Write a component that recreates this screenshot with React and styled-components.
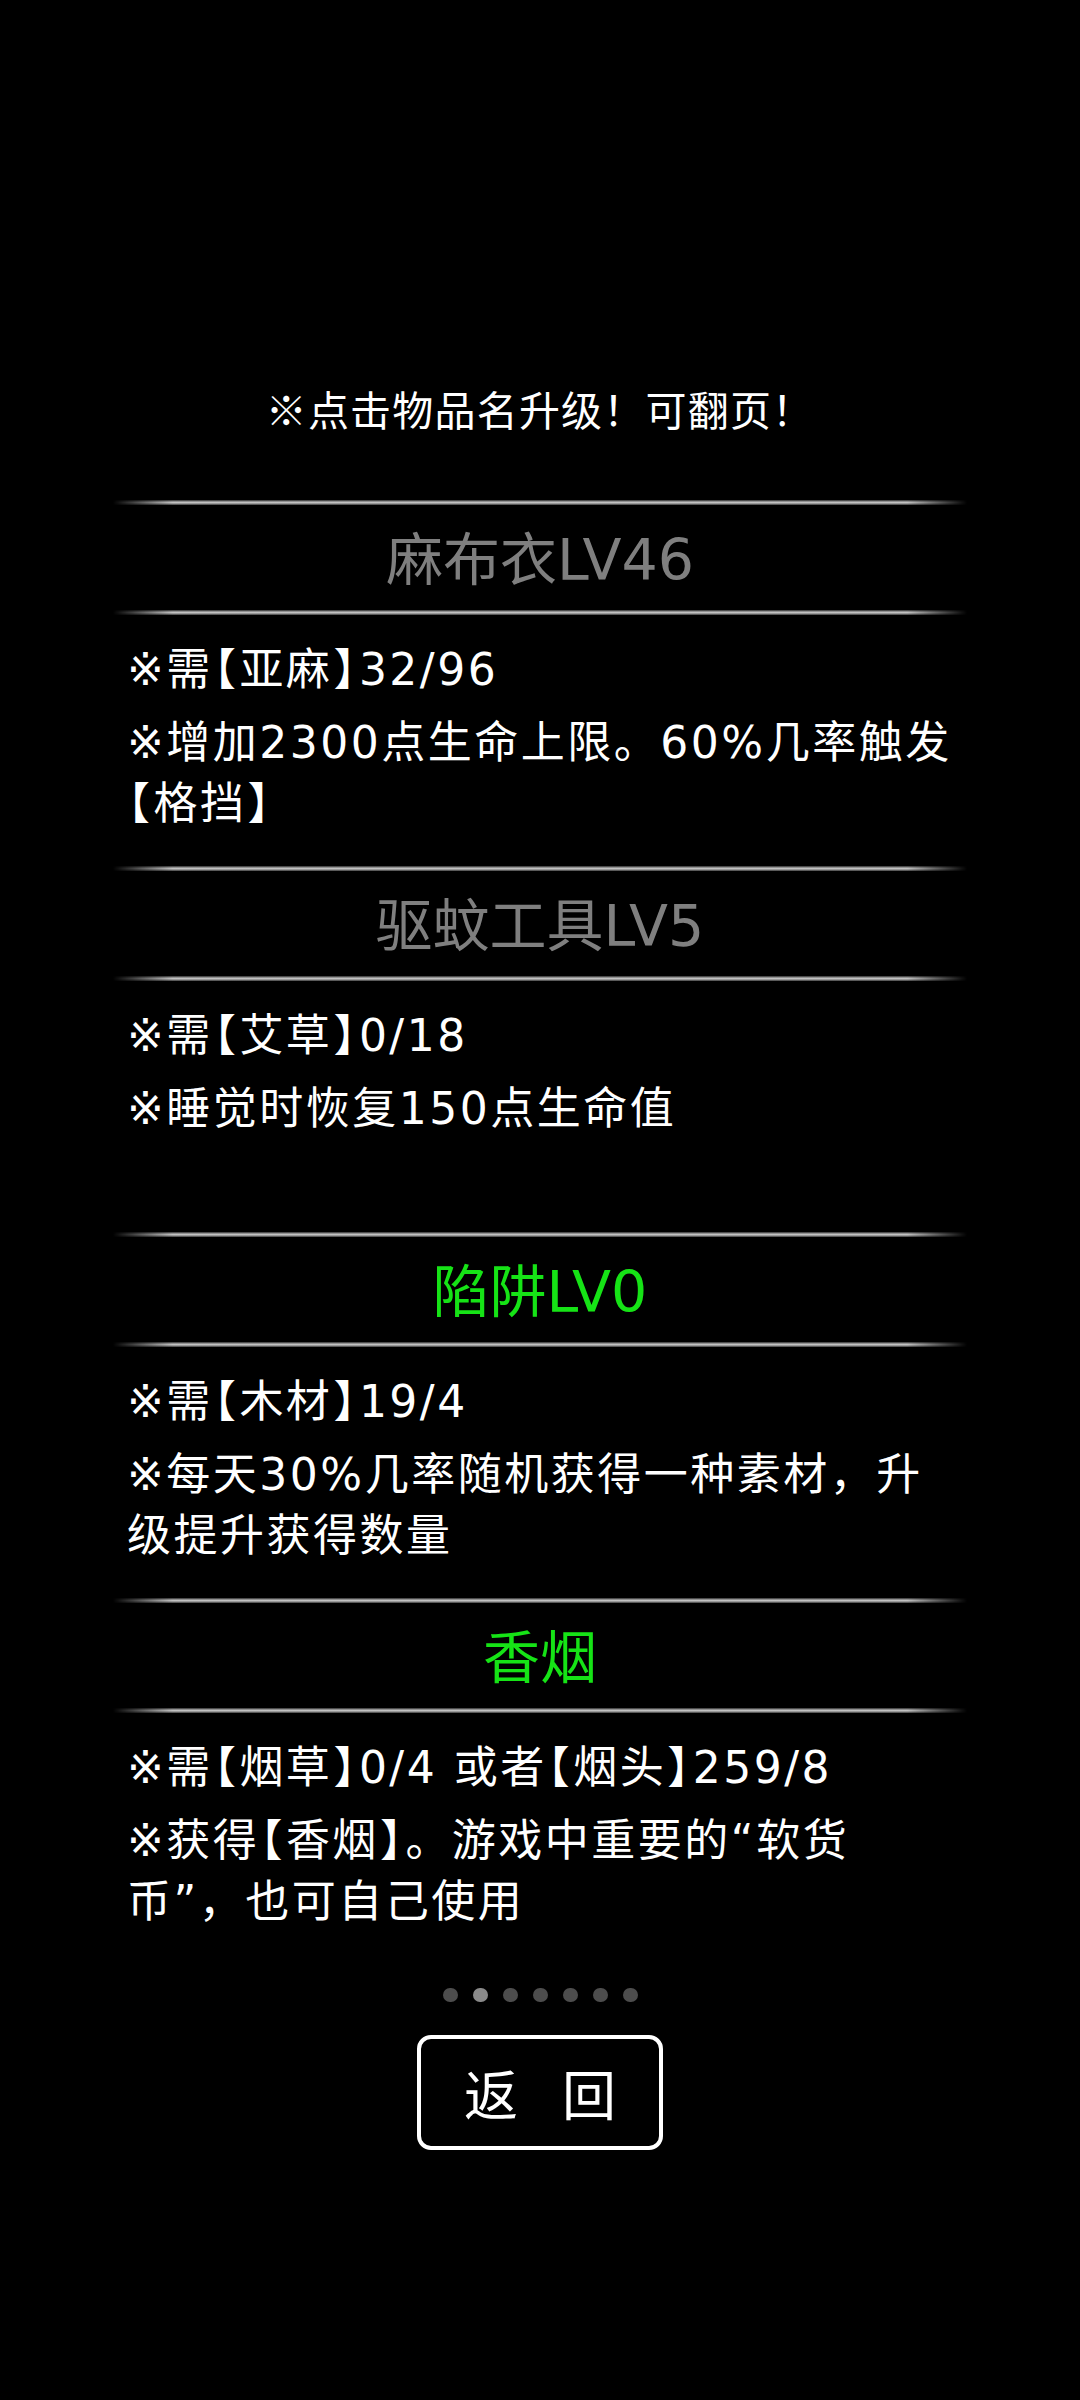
import React from 'react'
import styled, { createGlobalStyle } from 'styled-components'

const GlobalStyle = createGlobalStyle`
    html, body {
        margin: 0;
        padding: 0;
        background: #000;
    }
    body {
        font-family: "Noto Sans CJK SC", "Noto Sans", sans-serif;
    }
`

const Page = styled.div`
    width: 1080px;
    min-height: 2400px;
    background: #000;
    color: #fff;
    display: flex;
    flex-direction: column;
    align-items: center;
    padding-top: 379px;
    box-sizing: border-box;
`

const Hint = styled.div`
    font-size: 41px;
    line-height: 59px;
    margin-bottom: 62px;
    letter-spacing: 1.2px;
`

const List = styled.div`
    width: 854px;
    display: flex;
    flex-direction: column;
`

const Item = styled.div`
    height: 366px;
    display: flex;
    flex-direction: column;
`

const Rule = styled.div`
    height: 5px;
    flex-shrink: 0;
    background: linear-gradient(180deg, #2a2a2a 0%, #b4b4b4 40%, #c8c8c8 55%, #3a3a3a 100%);
    -webkit-mask-image: linear-gradient(90deg, transparent 0%, #000 7%, #000 93%, transparent 100%);
    mask-image: linear-gradient(90deg, transparent 0%, #000 7%, #000 93%, transparent 100%);
`

const TitleBox = styled.div`
    height: 105px;
    padding-top: 6px;
    box-sizing: border-box;
    display: flex;
    align-items: center;
    justify-content: center;
`

const Title = styled.span`
    font-family: "DejaVu Sans", "Noto Sans CJK SC", sans-serif;
    font-size: 57px;
    line-height: 1;
    color: ${props => props.ready ? '#16e316' : '#7f7f7f'};
    cursor: pointer;
`

const Body = styled.div`
    padding: 24px 0 0 14px;
    display: flex;
    flex-direction: column;
    gap: 12px;
`

const Line = styled.div`
    font-family: "DejaVu Sans", "Noto Sans CJK SC", sans-serif;
    font-size: 44px;
    line-height: 61px;
    letter-spacing: 2.5px;
    color: #fff;
`

// brackets in the game font are narrower than a full em
const Bracket = styled.span`
    font-feature-settings: "halt";
    margin: 0 1px;
`

const Dots = styled.div`
    display: flex;
    gap: 15px;
    margin-top: 24px;
`

const Dot = styled.span`
    width: 15px;
    height: 14px;
    border-radius: 7px;
    background: ${props => props.active ? '#8a8a8a' : '#4d4d4d'};
`

const BackButton = styled.button`
    margin-top: 33px;
    width: 246px;
    height: 115px;
    box-sizing: border-box;
    border: 4px solid #fff;
    border-radius: 14px;
    background: #000;
    color: #fff;
    font-family: "Noto Sans CJK SC", sans-serif;
    font-size: 54px;
    display: flex;
    align-items: center;
    justify-content: center;
    gap: 44px;
    padding: 0;
    cursor: pointer;
`

const items = [
    {
        name: '麻布衣LV46',
        ready: false,
        need: '※需【亚麻】32/96',
        desc: ['※增加2300点生命上限。60%几率触发', '【格挡】'],
    },
    {
        name: '驱蚊工具LV5',
        ready: false,
        need: '※需【艾草】0/18',
        desc: ['※睡觉时恢复150点生命值'],
    },
    {
        name: '陷阱LV0',
        ready: true,
        need: '※需【木材】19/4',
        desc: ['※每天30%几率随机获得一种素材，升', '级提升获得数量'],
    },
    {
        name: '香烟',
        ready: true,
        need: '※需【烟草】0/4 或者【烟头】259/8',
        desc: ['※获得【香烟】。游戏中重要的“软货', '币”，也可自己使用'],
    },
]

const withBrackets = (text) =>
    text.split(/([【】])/).map((part, i) =>
        part === '【' || part === '】'
            ? <Bracket key={i}>{part}</Bracket>
            : part
    )

const App = () => {
    return (
        <Page lang="zh-CN">
            <GlobalStyle />
            <Hint>※点击物品名升级！可翻页！</Hint>
            <List>
                {items.map(item => (
                    <Item key={item.name}>
                        <Rule />
                        <TitleBox>
                            <Title ready={item.ready}>{item.name}</Title>
                        </TitleBox>
                        <Rule />
                        <Body>
                            <Line>{withBrackets(item.need)}</Line>
                            <Line>
                                {item.desc.map((d, i) => (
                                    <React.Fragment key={i}>
                                        {i > 0 && <br />}
                                        {withBrackets(d)}
                                    </React.Fragment>
                                ))}
                            </Line>
                        </Body>
                    </Item>
                ))}
            </List>
            <Dots>
                {[0, 1, 2, 3, 4, 5, 6].map(i => (
                    <Dot key={i} active={i === 1} />
                ))}
            </Dots>
            <BackButton>
                <span>返</span>
                <span>回</span>
            </BackButton>
        </Page>
    )
}

export default App
